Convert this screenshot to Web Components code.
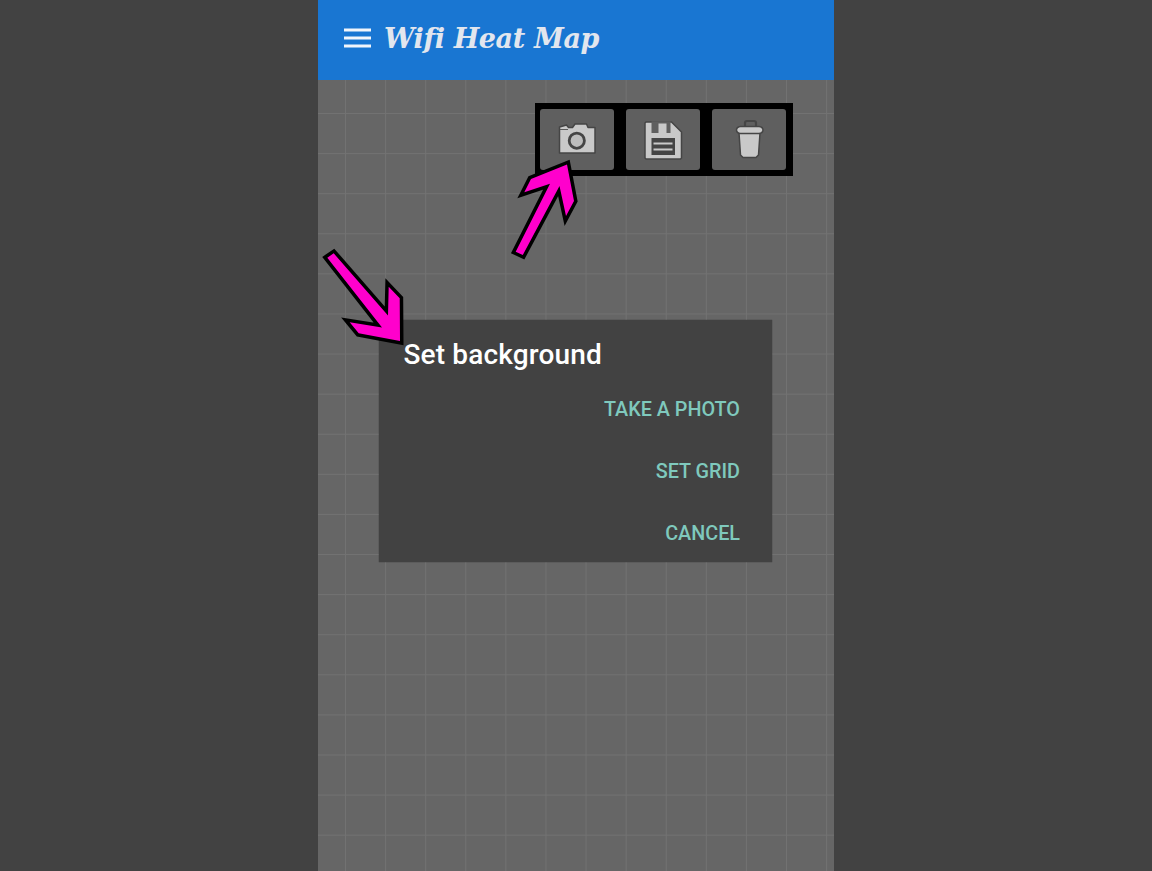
<!doctype html>
<html>
<head>
<meta charset="utf-8">
<title>Wifi Heat Map</title>
<style>
  html, body { margin: 0; height: 100%; background: #424242; overflow: hidden; }
  body { display: flex; justify-content: center; font-family: Roboto, sans-serif; }
</style>
</head>
<body>
<phone-frame>
  <app-bar slot="top">Wifi Heat Map</app-bar>
  <map-canvas>
    <tool-strip>
      <tool-button>
        <svg viewBox="0 0 74 61" width="74" height="61">
          <path d="M19.500 19.500l0-1.500 7-2 2 2.500 4 0 2.500-3.500 11.500 0 1.500 3.500 7 0 0 25.500-35.500 0z" fill="#c9c9c9" stroke="#454545" stroke-width="1.500" stroke-linejoin="round"/>
          <path d="M20 20.500l8 0" stroke="#5a5a5a" stroke-width="1"/>
          <circle cx="36.800" cy="31.700" r="7.600" fill="#bdbdbd" stroke="#454545" stroke-width="2.800"/>
        </svg>
      </tool-button>
      <tool-button>
        <svg viewBox="0 0 74 61" width="74" height="61">
          <path d="M20 13l25.500 0 10 10 0 26-1 1-34.500 0-1-1 0-35z" fill="#c9c9c9" stroke="#454545" stroke-width="1.500" stroke-linejoin="round"/>
          <path d="M25.500 12.300l19 0 0 11.700-19 0z" fill="#5f5f5f"/>
          <rect x="32.500" y="14.500" width="8" height="9.500" fill="#c9c9c9"/>
          <rect x="25.500" y="29" width="23.500" height="17" fill="#454545"/>
          <path d="M27.500 34.500l19 0M27.500 40.500l19 0" stroke="#c9c9c9" stroke-width="2"/>
        </svg>
      </tool-button>
      <tool-button>
        <svg viewBox="0 0 74 61" width="74" height="61">
          <path d="M33 18l0-4q0-2 2-2l7 0q2 0 2 2l0 4" fill="none" stroke="#454545" stroke-width="2.200"/>
          <path d="M27 24l21 0-1.500 22-2.500 2.500-13 0-2.500-2.500z" fill="#c9c9c9" stroke="#454545" stroke-width="1.500" stroke-linejoin="round"/>
          <path d="M24.500 21q0-3 4-3.500l18.500 0q4 .5 4 3.500 0 3-4 3.500l-18.500 0q-4-.5-4-3.500z" fill="#c9c9c9" stroke="#454545" stroke-width="1.500"/>
        </svg>
      </tool-button>
    </tool-strip>
    <set-dialog>
      <span slot="title">Set background</span>
      <dialog-action>TAKE A PHOTO</dialog-action>
      <dialog-action>SET GRID</dialog-action>
      <dialog-action>CANCEL</dialog-action>
    </set-dialog>
  </map-canvas>
  <callout-arrows slot="over"></callout-arrows>
</phone-frame>

<script>
class PhoneFrame extends HTMLElement {
  constructor() {
    super()
    this.attachShadow({ mode: 'open' }).innerHTML = `
      <style>
        :host { display: flex; flex-direction: column; position: relative; width: 516px; height: 871px; overflow: hidden; }
        .over { position: absolute; inset: 0; pointer-events: none; }
      </style>
      <slot name="top"></slot>
      <slot></slot>
      <div class="over"><slot name="over"></slot></div>
    `
  }
}

class AppBar extends HTMLElement {
  constructor() {
    super()
    this.attachShadow({ mode: 'open' }).innerHTML = `
      <style>
        :host { display: flex; align-items: center; flex: none; height: 80px; box-sizing: border-box; padding: 0 0 4px 26px; background: #1976d2; }
        .menu { display: block; width: 27px; height: 20px; margin-right: 13px; }
        .title { font: italic bold 27px "DejaVu Serif", "Liberation Serif", serif; color: #e2e6ee; letter-spacing: -.35px; white-space: nowrap; }
      </style>
      <svg class="menu" viewBox="0 0 27 20"><path d="M0 2h27M0 10h27M0 18h27" stroke="#f1f5fb" stroke-width="3"/></svg>
      <span class="title"><slot></slot></span>
    `
  }
}

class MapCanvas extends HTMLElement {
  constructor() {
    super()
    this.attachShadow({ mode: 'open' }).innerHTML = `
      <style>
        :host {
          --line: #727272;
          display: block; flex: 1; position: relative;
          background-color: #666;
          background-image: linear-gradient(90deg, var(--line) 1px, transparent 1px), linear-gradient(var(--line) 1px, transparent 1px);
          background-size: 40.1px 40.1px;
          background-position: 27px 33px;
        }
      </style>
      <slot></slot>
    `
  }
}

class ToolStrip extends HTMLElement {
  constructor() {
    super()
    this.attachShadow({ mode: 'open' }).innerHTML = `
      <style>
        :host { display: flex; gap: 12px; position: absolute; left: 217px; top: 23px; padding: 6px 7px 6px 5px; background: #000; }
      </style>
      <slot></slot>
    `
  }
}

class ToolButton extends HTMLElement {
  constructor() {
    super()
    this.attachShadow({ mode: 'open' }).innerHTML = `
      <style>
        :host { display: block; width: 74px; height: 61px; border-radius: 3px; background: #5f5f5f; }
        ::slotted(svg) { display: block; }
      </style>
      <slot></slot>
    `
  }
}

class SetDialog extends HTMLElement {
  constructor() {
    super()
    this.attachShadow({ mode: 'open' }).innerHTML = `
      <style>
        :host { display: block; position: absolute; left: 61px; top: 240px; width: 392.500px; height: 242px; box-sizing: border-box; background: #424242; box-shadow: 0 0 1px #333; }
        .title { padding: 18px 24.500px 0; font: 500 28px/34px Roboto, sans-serif; letter-spacing: .15px; color: #fff; }
        .actions { display: flex; flex-direction: column; align-items: flex-end; padding: 7px 31.500px 0 0; }
      </style>
      <div class="title"><slot name="title"></slot></div>
      <div class="actions"><slot></slot></div>
    `
  }
}

class DialogAction extends HTMLElement {
  constructor() {
    super()
    this.attachShadow({ mode: 'open' }).innerHTML = `
      <style>
        :host { display: block; height: 62px; font: 500 19.800px/62px Roboto, sans-serif; color: #7fc9bd; white-space: nowrap; }
      </style>
      <slot></slot>
    `
  }
}

class CalloutArrows extends HTMLElement {
  constructor() {
    super()
    this.attachShadow({ mode: 'open' }).innerHTML = `
      <style>
        :host { display: block; width: 516px; height: 871px; }
        svg { display: block; }
        polygon { fill: #ff00cc; stroke: #000; stroke-width: 7; stroke-linejoin: miter; stroke-miterlimit: 8; paint-order: stroke; }
      </style>
      <svg width="516" height="871" viewBox="318 0 516 871">
        <polygon points="515.700,251.700 522.800,255 559.500,186 566,216 574,201 567,164.500 531,179 524.300,192.300 550,183.800"/>
        <polygon points="327.300,257.700 333.700,253.300 388,315.500 388.700,286.700 399.700,298.300 400,341 358.700,333.300 349.700,322.300 382,327.500"/>
      </svg>
    `
  }
}

customElements.define('phone-frame', PhoneFrame)
customElements.define('app-bar', AppBar)
customElements.define('map-canvas', MapCanvas)
customElements.define('tool-strip', ToolStrip)
customElements.define('tool-button', ToolButton)
customElements.define('set-dialog', SetDialog)
customElements.define('dialog-action', DialogAction)
customElements.define('callout-arrows', CalloutArrows)
</script>
</body>
</html>
